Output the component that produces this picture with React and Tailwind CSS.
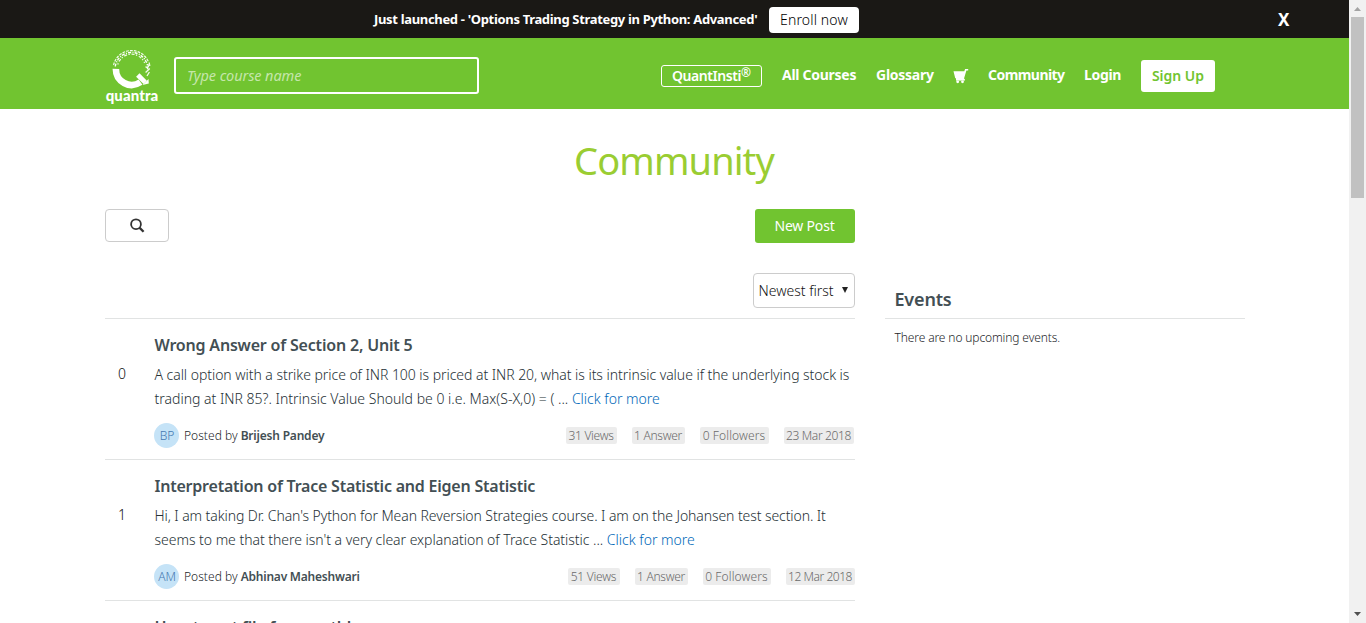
const posts = [
  {
    votes: "0",
    title: "Wrong Answer of Section 2, Unit 5",
    titleClass: "tracking-[-0.19px]",
    lines: [
      ["A call option with a strike price of INR 100 is priced at INR 20, what is its intrinsic value if the underlying stock is", "tracking-[-0.045px]"],
      ["trading at INR 85?. Intrinsic Value Should be 0 i.e. Max(S-X,0) = ( ...", "tracking-[0.005px]"],
    ],
    initials: "BP",
    author: "Brijesh Pandey",
    authorClass: "tracking-[-0.2px]",
    tagsClass: "mr-px",
    tags: [
      ["31 Views", "w-[51px] tracking-[-0.31px]"],
      ["1 Answer", "w-[53px] tracking-[-0.28px]"],
      ["0 Followers", "w-[69px] tracking-[0.12px]"],
      ["23 Mar 2018", "w-[70px] tracking-[-0.36px]"],
    ],
  },
  {
    votes: "1",
    title: "Interpretation of Trace Statistic and Eigen Statistic",
    titleClass: "tracking-[-0.22px]",
    lines: [
      ["Hi, I am taking Dr. Chan's Python for Mean Reversion Strategies course. I am on the Johansen test section. It", "tracking-[-0.085px]"],
      ["seems to me that there isn't a very clear explanation of Trace Statistic ...", "tracking-[-0.03px]"],
    ],
    initials: "AM",
    author: "Abhinav Maheshwari",
    authorClass: "tracking-[-0.22px]",
    tagsClass: "mr-0",
    tags: [
      ["51 Views", "w-[52px] tracking-[-0.25px]"],
      ["1 Answer", "w-[53px] tracking-[-0.28px]"],
      ["0 Followers", "w-[68px] tracking-[0.12px]"],
      ["12 Mar 2018", "w-[69px] tracking-[-0.45px]"],
    ],
  },
];

function Logo() {
  return (
    <div className="mt-[11px] flex h-[58px] w-[54px] flex-col items-center text-white">
      <svg width="42" height="40" viewBox="0 0 42 40" fill="none" stroke="currentColor" className="shrink-0">
        <path d="M4.3 17.5A16.2 16.2 0 0 1 36.6 22" strokeWidth="1.4" strokeDasharray="3 1.4 1 1.2" />
        <path d="M2.6 16.2A18.3 18.3 0 0 1 37.5 13" strokeWidth="1.2" strokeDasharray="2.8 1.1" opacity=".9" />
        <path d="M6.8 15.5A14.2 14.2 0 0 1 33.6 14" strokeWidth="1.2" strokeDasharray="1.4 1.8 3 1.4" opacity=".9" />
        <path d="M38.2 13.5L38.8 17M36.8 15L37.6 18M34.6 17.5L36 19M38.8 19.5L34.6 23.5M38.4 23L36 27" strokeWidth="1.3" opacity=".9" />
        <path d="M4.9 19.8A15.7 15.7 0 0 0 29.5 33.1" strokeWidth="6.6" />
        <path d="M26.8 26L34.2 33.4" strokeWidth="4.8" />
        <path d="M31.5 36L37.8 34.5L37.5 30Z" fill="currentColor" stroke="none" />
      </svg>
      <span className="mt-[-3px] font-['Lato'] text-[15px] leading-[18px] font-black tracking-[0.1px]">quantra</span>
    </div>
  );
}

function Cart() {
  return (
    <svg width="16" height="16" viewBox="0 0 16 16" fill="white" className="mt-0 ml-[19px] shrink-0">
      <path d="M0.5 3.2H11.3L12.1 0.9H15.2V2.5H13.4L11.1 10.2L11.5 11.6H3V10.6L2.2 10.1L0.5 3.2Z" />
      <rect x="3" y="11" width="8.8" height="1.6" />
      <circle cx="4.7" cy="13.8" r="1.4" />
      <circle cx="9.5" cy="13.8" r="1.4" />
    </svg>
  );
}

function Post({ post }) {
  return (
    <article className="flex h-[141px] border-b border-[#e1e3e3] pt-[14px]">
      <div className="w-[49.5px] shrink-0 pt-[29px] pl-[13px] text-[14px] leading-[24px] font-light text-[#111]">{post.votes}</div>
      <div className="min-w-0 flex-1 whitespace-nowrap">
        <h3 className={`text-[16px] leading-[24px] font-semibold text-[#434f54] ${post.titleClass}`}>{post.title}</h3>
        <p className="mt-[6px] text-[14px] leading-[24px] font-light text-[#253035]">
          <span className={post.lines[0][1]}>{post.lines[0][0]}</span>
          <br />
          <span className={post.lines[1][1]}>{post.lines[1][0]}</span>{" "}
          <a className="text-[#0068b8]">Click for more</a>
        </p>
        <div className="mt-[12px] -ml-[0.5px] flex h-[25px] items-center text-[12px]">
          <span className="flex size-[25px] items-center justify-center rounded-full bg-[#c5e3f7] pl-px font-light tracking-[-0.2px] text-[#4478b0]">{post.initials}</span>
          <span className="ml-[5px] font-light tracking-[0.03px] text-[#1c2529]">Posted by</span>
          <span className={`ml-[3px] font-semibold text-[#434f54] ${post.authorClass}`}>{post.author}</span>
          <div className={`ml-auto flex gap-[15px] ${post.tagsClass}`}>
            {post.tags.map(([label, cls]) => (
              <span key={label} className={`h-[17px] rounded-[2px] bg-[#ececec] pr-px text-center leading-[17px] font-light text-[#6a6a6a] ${cls}`}>{label}</span>
            ))}
          </div>
        </div>
      </div>
    </article>
  );
}

export default function App() {
  return (
    <div className="flex h-[623px] overflow-hidden bg-white font-['Noto_Sans','Open_Sans',sans-serif]">
      <div className="flex w-[1349px] shrink-0 flex-col overflow-hidden">
        <div className="flex h-[38px] shrink-0 items-center bg-[#1a1815] pl-[374px] whitespace-nowrap text-white">
          <span className="mt-px w-[385px] text-[13px] font-bold tracking-[-0.33px]">Just launched - 'Options Trading Strategy in Python: Advanced'</span>
          <button className="mt-[2px] ml-[10px] h-[26px] w-[90px] rounded-[4px] bg-white pb-[2px] text-[14px] font-light tracking-[0.16px] text-black">Enroll now</button>
          <span className="ml-[419px] text-[17px] leading-none font-bold">X</span>
        </div>

        <header className="flex h-[71px] shrink-0 items-start bg-[#71c430] pl-[105px] whitespace-nowrap text-white">
          <Logo />
          <div className="mt-[19px] ml-[15px] flex h-[37px] w-[305px] items-center rounded-[3px] border-2 border-white pl-[11px] text-[14.5px] tracking-[-0.1px] text-white/60 italic">Type course name</div>
          <nav className="mt-[22px] ml-[182px] flex h-[32px] items-center text-[14px] font-bold">
            <a className="flex h-[22px] w-[101px] items-center justify-center rounded-[3px] border border-white pb-px font-semibold tracking-[-0.42px]">
              QuantInsti<sup className="top-[-3px] text-[12px] tracking-normal">®</sup>
            </a>
            <a className="ml-[20px] w-[75px] pb-[4px] tracking-[-0.27px]">All Courses</a>
            <a className="ml-[19px] w-[58px] pb-[4px] tracking-[-0.25px]">Glossary</a>
            <Cart />
            <a className="ml-[19px] w-[77px] pb-[4px] tracking-[-0.55px]">Community</a>
            <a className="ml-[19px] w-[37px] pb-[4px] tracking-[-0.34px]">Login</a>
            <a className="ml-[20px] flex h-[32px] w-[74px] items-center justify-center rounded-[3px] bg-white pb-[2px] font-semibold text-[#71c430]">Sign Up</a>
          </nav>
        </header>

        <main className="px-[105px]">
          <h1 className="mt-[29px] h-[46px] pr-px text-center text-[38px] leading-[45px] tracking-[-0.9px] text-[#9acd32]">Community</h1>
          <div className="mt-[25px] flex gap-[30px]">
            <section className="w-[750px] shrink-0">
              <div className="flex h-[34px] justify-between">
                <button className="flex h-[33px] w-[64px] items-center justify-center rounded-[4px] border border-[#ccc]">
                  <svg width="15" height="15" viewBox="0 0 15 15" fill="none" stroke="#333" className="mt-[-1px]">
                    <circle cx="6" cy="6.2" r="4.9" strokeWidth="1.8" />
                    <path d="M9.4 9.6L13.6 13.8" strokeWidth="2.3" />
                  </svg>
                </button>
                <button className="h-[34px] w-[100px] rounded-[3px] bg-[#71c430] pr-px pb-[2px] text-[14px] tracking-[-0.2px] text-white">New Post</button>
              </div>
              <div className="mt-[30px] flex h-[46px] items-start justify-end border-b border-[#e1e3e3]">
                <div className="flex h-[35px] w-[102px] items-center rounded-[4px] border border-[#ccc] pl-[4.5px] text-[14px] font-light text-[#111]">
                  Newest first
                  <svg width="6" height="6" viewBox="0 0 6 6" className="mt-[-2px] ml-[8px]">
                    <path d="M0 0H6L3 6Z" fill="#222" />
                  </svg>
                </div>
              </div>
              {posts.map((post) => (
                <Post key={post.title} post={post} />
              ))}
              <h3 className="pt-[14px] pl-[49.5px] text-[16px] leading-[24px] font-semibold tracking-[-0.2px] text-[#434f54]">How to get file for monthly</h3>
            </section>
            <aside className="w-[360px] shrink-0">
              <h2 className="mt-[64px] h-[46px] border-b border-[#e1e3e3] pt-[14px] pl-[9.5px] text-[18px] leading-[24px] font-semibold tracking-[-0.18px] text-[#434f54]">Events</h2>
              <p className="pt-[10px] pl-[9.5px] text-[12px] leading-[18px] font-light tracking-[-0.12px] text-[#1c2529]">There are no upcoming events.</p>
            </aside>
          </div>
        </main>
      </div>

      <div className="flex h-full w-[17px] flex-col items-center bg-[#f1f1f1]">
        <svg width="17" height="17" viewBox="0 0 17 17" className="shrink-0">
          <path d="M5 11L8.5 7L12 11Z" fill="#a3a3a3" />
        </svg>
        <div className="h-[181px] w-[13px] shrink-0 bg-[#c1c1c1]" />
        <svg width="17" height="17" viewBox="0 0 17 17" className="mt-auto shrink-0">
          <path d="M5 6L8.5 10L12 6Z" fill="#505050" />
        </svg>
      </div>
    </div>
  );
}
